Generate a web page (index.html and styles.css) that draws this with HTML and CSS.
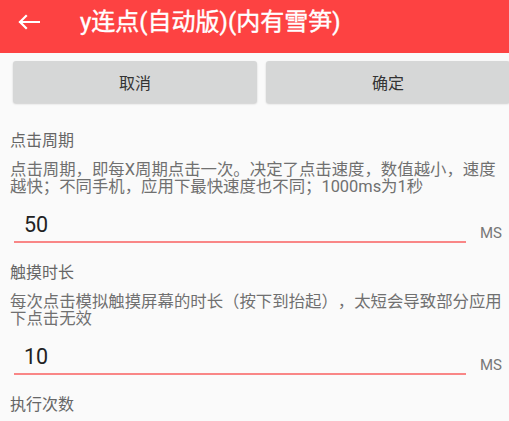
FILE: index.html
```html
<!DOCTYPE html>
<html lang="zh-CN">
<head>
    <meta charset="UTF-8">
    <meta name="viewport" content="width=device-width, initial-scale=1.0">
    <title>y连点(自动版)(内有雪笋)</title>
    <link rel="stylesheet" href="styles.css">
</head>
<body>
    <div class="toolbar">
        <svg class="back" width="22" height="16" viewBox="0 0 22 16">
            <path d="M2 8H21M8 2L2 8L8 14" fill="none" stroke="#fff" stroke-width="2.2" stroke-linecap="square"/>
        </svg>
        <div class="title">y连点(自动版)(内有雪笋)</div>
    </div>

    <div class="actions">
        <div class="btn">取消</div>
        <div class="btn">确定</div>
    </div>

    <div class="setting">
        <div class="label">点击周期</div>
        <div class="desc">点击周期，即每X周期点击一次。决定了点击速度，数值越小，速度越快；不同手机，应用下最快速度也不同；1000ms为1秒</div>
        <div class="field-row">
            <div class="field">50</div>
            <div class="unit">MS</div>
        </div>
    </div>

    <div class="setting">
        <div class="label">触摸时长</div>
        <div class="desc">每次点击模拟触摸屏幕的时长（按下到抬起），太短会导致部分应用下点击无效</div>
        <div class="field-row">
            <div class="field">10</div>
            <div class="unit">MS</div>
        </div>
    </div>

    <div class="setting">
        <div class="label">执行次数</div>
    </div>
</body>
</html>
```

FILE: styles.css
```css
* {
    margin: 0;
    padding: 0;
    box-sizing: border-box;
}

body {
    background: #fafafa;
    font-family: Roboto, "Noto Sans CJK SC", sans-serif;
    text-spacing-trim: space-all;
    overflow: hidden;
    height: 421px;
}

.toolbar {
    height: 53px;
    background: #fd4242;
    display: flex;
    align-items: flex-start;
    padding: 8px 0 0 18px;
}

.back {
    margin-top: 6px;
}

.title {
    margin-left: 40px;
    color: #fff;
    font-size: 24px;
    font-weight: normal;
    -webkit-text-stroke: 0.4px #fff;
    line-height: 28px;
}

.actions {
    display: grid;
    grid-template-columns: 244px 244px;
    gap: 9px;
    padding: 8px 0 0 13px;
}

.btn {
    height: 42px;
    background: #d6d7d7;
    border-radius: 3px;
    box-shadow: 0 1px 2px rgba(0, 0, 0, 0.18);
    display: flex;
    align-items: center;
    justify-content: center;
    color: #333;
    font-size: 16px;
}

.setting {
    padding: 0 3px 0 10px;
    margin-bottom: 20px;
}

.actions + .setting {
    margin-top: 28px;
}

.label {
    color: #666;
    font-size: 16px;
    line-height: 20px;
    margin-bottom: 10px;
}

.desc {
    color: #707070;
    font-size: 16.4px;
    line-height: 17px;
}

.field-row {
    display: flex;
    align-items: center;
    margin-top: 16px;
}

.field {
    width: 452px;
    margin-left: 4px;
    padding: 0 0 2px 10px;
    border-bottom: 2px solid #f98686;
    color: #222;
    font-size: 21.5px;
    line-height: 28px;
}

.unit {
    margin-left: 14px;
    margin-top: 12px;
    color: #777;
    font-size: 15px;
}
```
